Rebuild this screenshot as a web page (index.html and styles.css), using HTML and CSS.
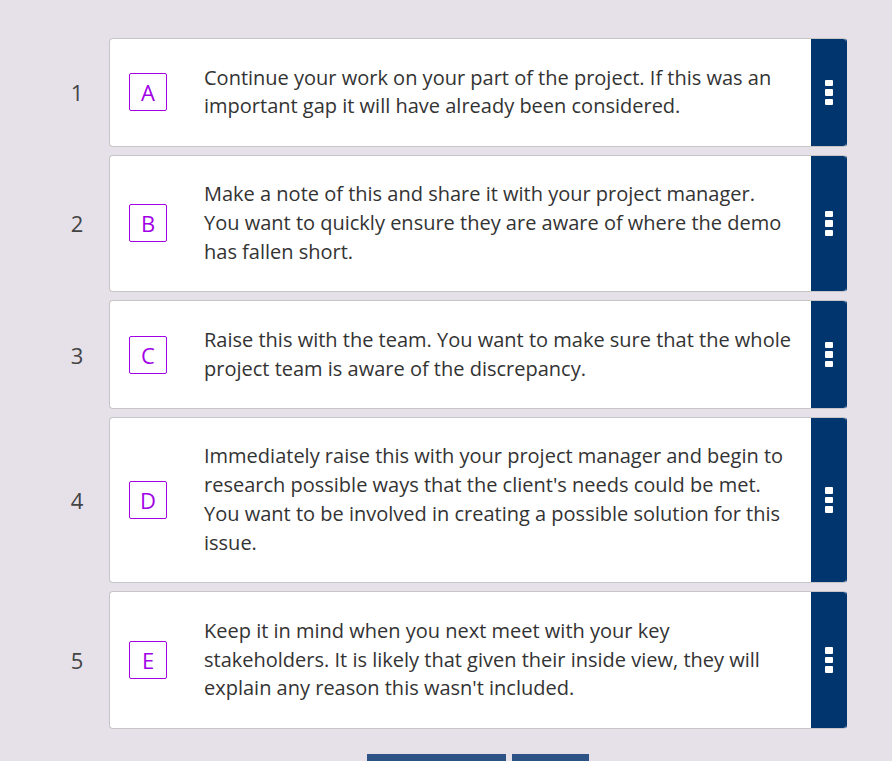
FILE: index.html
```html
<!DOCTYPE html>
<html>
<head>
<meta charset="utf-8">
<link rel="stylesheet" href="styles.css">
</head>
<body>
<div class="page">
  <div class="list">
    <div class="row">
      <div class="num">1</div>
      <div class="card">
        <div class="letter">A</div>
        <div class="text">Continue your work on your part of the project. If this was an important gap it will have already been considered.</div>
        <div class="handle"><span class="dots"><i></i><i></i><i></i></span></div>
      </div>
    </div>
    <div class="row">
      <div class="num">2</div>
      <div class="card">
        <div class="letter">B</div>
        <div class="text">Make a note of this and share it with your project manager. You want to quickly ensure they are aware of where the demo has fallen short.</div>
        <div class="handle"><span class="dots"><i></i><i></i><i></i></span></div>
      </div>
    </div>
    <div class="row">
      <div class="num">3</div>
      <div class="card">
        <div class="letter">C</div>
        <div class="text">Raise this with the team. You want to make sure that the whole project team is aware of the discrepancy.</div>
        <div class="handle"><span class="dots"><i></i><i></i><i></i></span></div>
      </div>
    </div>
    <div class="row">
      <div class="num">4</div>
      <div class="card">
        <div class="letter">D</div>
        <div class="text">Immediately raise this with your project manager and begin to research possible ways that the client's needs could be met. You want to be involved in creating a possible solution for this issue.</div>
        <div class="handle"><span class="dots"><i></i><i></i><i></i></span></div>
      </div>
    </div>
    <div class="row">
      <div class="num">5</div>
      <div class="card">
        <div class="letter">E</div>
        <div class="text">Keep it in mind when you next meet with your key stakeholders. It is likely that given their inside view, they will explain any reason this wasn't included.</div>
        <div class="handle"><span class="dots"><i></i><i></i><i></i></span></div>
      </div>
    </div>
  </div>
  <div class="buttons">
    <div class="btn btn-wide"></div>
    <div class="btn btn-narrow"></div>
  </div>
</div>
</body>
</html>
```
FILE: styles.css
```css
html, body {
  margin: 0;
  padding: 0;
  background: #e6e1e9;
  font-family: "Open Sans", "Noto Sans", sans-serif;
  color: #333;
}
.page {
  padding: 38px 45px 0 45px;
  height: 761px;
  box-sizing: border-box;
  overflow: hidden;
}
.list {
  display: flex;
  flex-direction: column;
  gap: 8px;
}
.row {
  display: flex;
  align-items: center;
}
.num {
  width: 64px;
  text-align: center;
  font-size: 22px;
  color: #444;
}
.card {
  flex: 1;
  display: flex;
  align-items: center;
  background: #fff;
  border: 1px solid #c6c6c6;
  border-right-color: #00356e;
  border-radius: 4px;
  overflow: hidden;
  align-self: stretch;
}
.letter {
  width: 36px;
  height: 36px;
  margin-left: 19px;
  border: 1px solid #a100e6;
  border-radius: 2px;
  color: #a100e6;
  font-size: 22px;
  line-height: 36px;
  text-align: center;
  flex: none;
}
.text {
  flex: 1;
  padding: 24.6px 17px 24.5px 37px;
  font-size: 20px;
  line-height: 28.8px;
}
.handle {
  align-self: stretch;
  width: 35px;
  background: #00356e;
  display: flex;
  align-items: center;
  justify-content: center;
  flex: none;
}
.dots {
  display: flex;
  flex-direction: column;
  gap: 3px;
}
.dots i {
  display: block;
  width: 8px;
  height: 6.5px;
  background: #fff;
  border-radius: 1px;
}
.buttons {
  display: flex;
  justify-content: center;
  gap: 6px;
  margin-top: 25px;
  padding-left: 63px;
}
.btn {
  height: 30px;
  background: #2d5386;
}
.btn-wide { width: 139px; }
.btn-narrow { width: 77px; }
```
